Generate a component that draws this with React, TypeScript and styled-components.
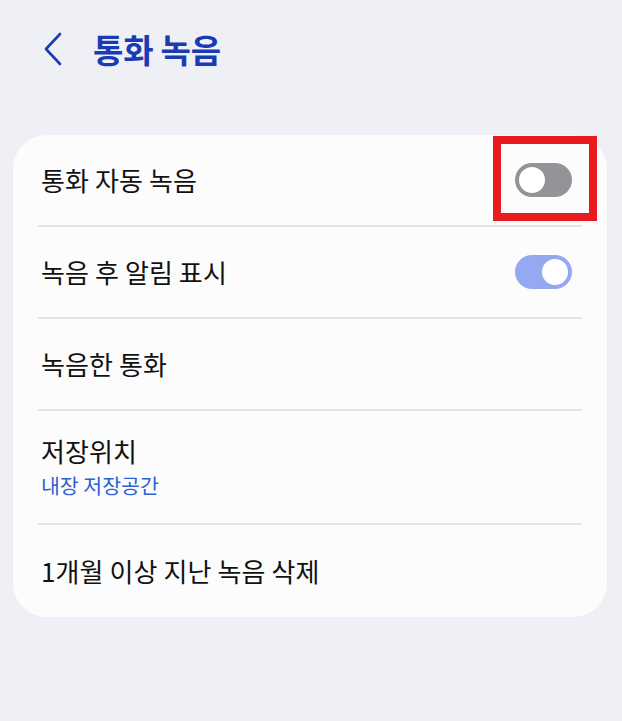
import React from "react";
import styled, { createGlobalStyle } from "styled-components";

const GlobalStyle = createGlobalStyle`
  html, body {
    margin: 0;
    padding: 0;
    background: #eff0f5;
  }
  body {
    font-family: "Noto Sans CJK KR", "Noto Sans", sans-serif;
    -webkit-font-smoothing: antialiased;
  }
`;

const Screen = styled.div`
  width: 622px;
  min-height: 721px;
  box-sizing: border-box;
  padding: 0 15px 0 13px;
  position: relative;
`;

const Header = styled.header`
  display: flex;
  align-items: center;
  height: 98px;
  padding-left: 30px;
  box-sizing: border-box;
`;

const BackButton = styled.button`
  border: none;
  background: none;
  padding: 0;
  width: 24px;
  height: 36px;
  display: flex;
  align-items: center;
  cursor: pointer;
`;

const Title = styled.h1`
  margin: 0 0 0 26px;
  font-size: 33px;
  font-weight: 700;
  color: #1b3bb3;
  letter-spacing: -0.2px;
`;

const Card = styled.section`
  margin-top: 37px;
  background: #fcfcfd;
  border-radius: 34px;
  padding: 0 25px 0 25px;
`;

const Row = styled.div<{ tall?: boolean }>`
  display: flex;
  align-items: center;
  justify-content: space-between;
  height: ${({ tall }) => (tall ? "114px" : "92px")};
  border-bottom: 2px solid #e4e4e8;
  box-sizing: border-box;
  &:last-child {
    border-bottom: none;
  }
`;

const Texts = styled.div`
  display: flex;
  flex-direction: column;
  padding-left: 3px;
`;

const Label = styled.span`
  font-size: 26px;
  color: #111;
  line-height: 34px;
  letter-spacing: 0.1px;
`;

const Sub = styled.span`
  font-size: 20.5px;
  color: #2f5fd6;
  line-height: 30px;
  margin-top: 2px;
`;

const Track = styled.div<{ on?: boolean }>`
  width: 57px;
  height: 34px;
  border-radius: 17px;
  background: ${({ on }) => (on ? "#95a8f2" : "#939398")};
  margin-right: 10px;
  display: flex;
  align-items: center;
  justify-content: ${({ on }) => (on ? "flex-end" : "flex-start")};
  padding: 0 2px;
  box-sizing: border-box;
`;

const Thumb = styled.div<{ on?: boolean }>`
  width: 30px;
  height: 30px;
  border-radius: 50%;
  background: #fff;
  box-sizing: border-box;
  border: 2px solid ${({ on }) => (on ? "#95a8f2" : "#939398")};
`;

const Highlight = styled.div`
  position: absolute;
  left: 493px;
  top: 136px;
  width: 104px;
  height: 85px;
  border: 8px solid #e81b1f;
  box-sizing: border-box;
  pointer-events: none;
`;

const Toggle: React.FC<{ on?: boolean }> = ({ on }) => (
  <Track on={on}>
    <Thumb on={on} />
  </Track>
);

export default function App() {
  return (
    <>
      <GlobalStyle />
      <Screen>
        <Header>
          <BackButton aria-label="back">
            <svg width="20" height="34" viewBox="0 0 20 34">
              <path d="M17 2 L3 17 L17 32" fill="none" stroke="#1b3bb3" strokeWidth="2.6" strokeLinecap="round" strokeLinejoin="round" />
            </svg>
          </BackButton>
          <Title>통화 녹음</Title>
        </Header>
        <Card>
          <Row>
            <Texts><Label>통화 자동 녹음</Label></Texts>
            <Toggle />
          </Row>
          <Row>
            <Texts><Label>녹음 후 알림 표시</Label></Texts>
            <Toggle on />
          </Row>
          <Row>
            <Texts><Label>녹음한 통화</Label></Texts>
          </Row>
          <Row tall>
            <Texts>
              <Label>저장위치</Label>
              <Sub>내장 저장공간</Sub>
            </Texts>
          </Row>
          <Row>
            <Texts><Label>1개월 이상 지난 녹음 삭제</Label></Texts>
          </Row>
        </Card>
        <Highlight />
      </Screen>
    </>
  );
}
